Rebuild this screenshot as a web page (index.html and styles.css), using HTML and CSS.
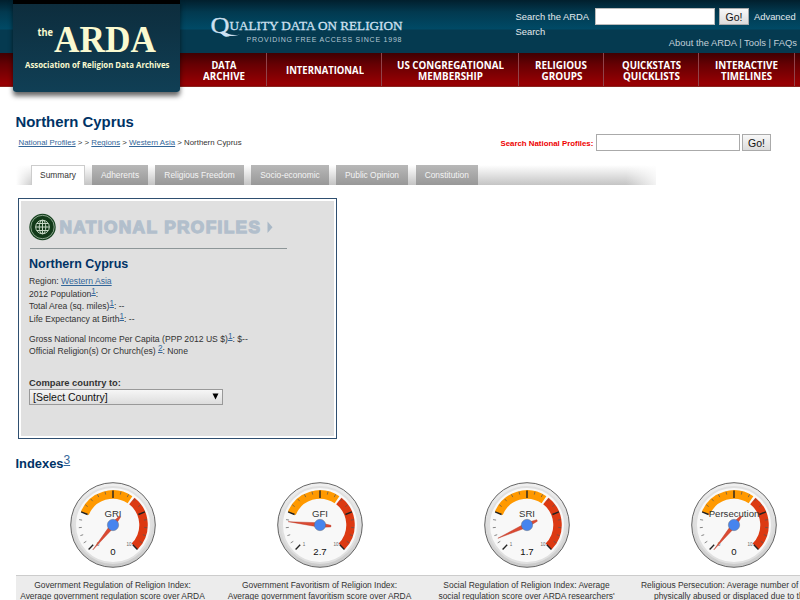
FILE: index.html
```html
<!DOCTYPE html>
<html lang="en">
<head>
<meta charset="utf-8">
<title>Northern Cyprus | National Profiles | the ARDA</title>
<link rel="stylesheet" href="styles.css">
</head>
<body>
<header class="site-header">
  <a class="logo">
    <svg width="167" height="92" viewBox="0 0 167 92">
      <g class="logo-sans"><text x="24.500" y="36" font-size="10" textLength="15.500" lengthAdjust="spacingAndGlyphs">the</text>
      <text x="12" y="68" font-size="8.600" textLength="144.500" lengthAdjust="spacingAndGlyphs">Association of Religion Data Archives</text></g>
      <text class="logo-name" x="41" y="52" textLength="102" lengthAdjust="spacingAndGlyphs">ARDA</text>
    </svg>
  </a>
  <div class="header-main">
    <div class="top-row">
      <svg class="tagline" width="230" height="53" viewBox="0 0 230 53">
        <g class="tagline-serif"><text x="30.500" y="32.500" font-size="24" textLength="19" lengthAdjust="spacingAndGlyphs">Q</text>
        <path d="M39 32C43 36 50 37.500 60 34.500C52 36 48 34 44 31.500Z" fill="#cfe0f0"/>
        <text x="49.500" y="29.500" font-size="13.500" textLength="173" lengthAdjust="spacingAndGlyphs">UALITY DATA ON RELIGION</text></g>
        <text class="tagline-sub" x="66.500" y="41.500" textLength="155" lengthAdjust="spacing">PROVIDING FREE ACCESS SINCE 1998</text>
      </svg>
      <div class="tools">
        <form class="site-search"><label>Search the ARDA</label><input type="text"><button type="button">Go!</button><a>Advanced</a></form>
        <a class="search-wrap">Search</a>
        <div class="util">About the ARDA | Tools | FAQs</div>
      </div>
    </div>
    <nav class="main-nav">
      <a class="n1"><svg width="42" height="33"><text x="8.500" y="15.500" textLength="25" lengthAdjust="spacingAndGlyphs">DATA</text><text x="0" y="26.500" textLength="42" lengthAdjust="spacingAndGlyphs">ARCHIVE</text></svg></a>
      <a class="n2"><svg width="78" height="33"><text x="0" y="20.500" textLength="78" lengthAdjust="spacingAndGlyphs">INTERNATIONAL</text></svg></a>
      <a class="n3"><svg width="107" height="33"><text x="0" y="15.500" textLength="107" lengthAdjust="spacingAndGlyphs">US CONGREGATIONAL</text><text x="21" y="26.500" textLength="65" lengthAdjust="spacingAndGlyphs">MEMBERSHIP</text></svg></a>
      <a class="n4"><svg width="52" height="33"><text x="0" y="15.500" textLength="52" lengthAdjust="spacingAndGlyphs">RELIGIOUS</text><text x="6.500" y="26.500" textLength="41" lengthAdjust="spacingAndGlyphs">GROUPS</text></svg></a>
      <a class="n5"><svg width="59" height="33"><text x="0" y="15.500" textLength="59" lengthAdjust="spacingAndGlyphs">QUICKSTATS</text><text x="1" y="26.500" textLength="57" lengthAdjust="spacingAndGlyphs">QUICKLISTS</text></svg></a>
      <a class="n6"><svg width="63" height="33"><text x="0" y="15.500" textLength="63" lengthAdjust="spacingAndGlyphs">INTERACTIVE</text><text x="6" y="26.500" textLength="51" lengthAdjust="spacingAndGlyphs">TIMELINES</text></svg></a>
      <a class="n7"></a>
    </nav>
  </div>
</header>

<main>
  <h1>Northern Cyprus</h1>
  <div class="crumb-row">
    <div class="crumbs"><a>National Profiles</a> &gt; &gt; <a>Regions</a> &gt; <a>Western Asia</a> &gt; Northern Cyprus</div>
    <form class="profile-search"><label>Search National Profiles:</label><input type="text"><button type="button">Go!</button></form>
  </div>
  <div class="tabs">
    <a class="tab active">Summary</a><a class="tab t2">Adherents</a><a class="tab t3">Religious Freedom</a><a class="tab t4">Socio-economic</a><a class="tab t5">Public Opinion</a><a class="tab t6">Constitution</a>
  </div>

  <section class="panel">
    <div class="panel-body">
      <svg class="panel-title" width="250" height="28" viewBox="0 0 250 28">
        <circle cx="13.500" cy="14" r="13.200" fill="#16421f"/>
        <circle cx="13.500" cy="14" r="11.700" fill="none" stroke="#b9c9b8" stroke-width=".7"/>
        <circle cx="13.500" cy="14" r="10.500" fill="#123a19"/>
        <g fill="none" stroke="#c6d8c5" stroke-width="1">
          <circle cx="13.500" cy="14" r="6.800"/><ellipse cx="13.500" cy="14" rx="3.300" ry="6.800"/>
          <path d="M13.500 7.200v13.600M6.700 14h13.600M7.800 10.500h11.400M7.800 17.500h11.400"/>
        </g>
        <text x="30.500" y="19.800" textLength="200.500" lengthAdjust="spacing">NATIONAL PROFILES</text>
        <path d="M238.500 8.500v11.500l5-5.700z" fill="#a9b8c6"/>
      </svg>
      <hr>
      <h2>Northern Cyprus</h2>
      <p>Region: <a>Western Asia</a><br>2012 Population<sup><a>1</a></sup>:<br>Total Area (sq. miles)<sup><a>1</a></sup>: --<br>Life Expectancy at Birth<sup><a>1</a></sup>: --</p>
      <p class="second">Gross National Income Per Capita (PPP 2012 US $)<sup><a>1</a></sup>: $--<br>Official Religion(s) Or Church(es) <sup><a>2</a></sup>: None</p>
      <div class="compare">Compare country to:</div>
      <div class="select"><span>[Select Country]</span><svg width="7" height="7"><path d="M.500 .500h6L3.500 6.500z"/></svg></div>
    </div>
  </section>

  <h3>Indexes<sup><a>3</a></sup></h3>

  <svg class="defs" width="0" height="0">
    <defs>
      <linearGradient id="rim" x1="0" y1="0" x2="0" y2="1"><stop offset="0" stop-color="#f0f0f0"/><stop offset="1" stop-color="#cacaca"/></linearGradient>
      <symbol id="dial" viewBox="-44 -44 88 88">
        <circle r="42.300" fill="url(#rim)" stroke="#555" stroke-width=".9"/>
        <circle r="38" fill="#f8f8f8" stroke="#e0e0e0" stroke-width="2"/>
        <path d="M-28.200 -11.700A30.500 30.500 0 0 1 17 -25.300" fill="none" stroke="#ff9900" stroke-width="8.500"/>
        <path d="M18.800 -24A30.500 30.500 0 0 1 21.600 21.600" fill="none" stroke="#dc3912" stroke-width="8.500"/>
        <path stroke="#222" stroke-width="1.400" d="M0 -34.500V-27M-31.900 -13.200L-25.400 -10.500M31.900 -13.200L25.400 -10.500M-24.400 24.400L-19.800 19.800M24.400 24.400L19.800 19.800"/>
        <path stroke="#555" stroke-width=".7" d="M8 -33.400L7.300 -30.400M15.600 -30.600L14.200 -27.900M22.300 -26.100L20.300 -23.800M27.700 -20.200L25.300 -18.400M33.900 -5.400L30.900 -4.900M34.200 2.700L31.200 2.400M32.600 10.600L29.800 9.700M29.300 17.900L26.700 16.300M-8 -33.400L-7.300 -30.400M-15.600 -30.600L-14.200 -27.900M-22.300 -26.100L-20.300 -23.800M-27.700 -20.200L-25.300 -18.400M-33.900 -5.400L-30.900 -4.900M-34.200 2.700L-31.200 2.400M-32.600 10.600L-29.800 9.700M-29.300 17.900L-26.700 16.300"/>
      </symbol>
      <symbol id="needle" viewBox="-44 -44 88 88">
        <path d="M0 -32L2.200 0L.800 11H-.800L-2.200 0Z" fill="#dc4a32" stroke="#b83a2a" stroke-width=".4"/>
      </symbol>
    </defs>
  </svg>

  <div class="indexes">
    <div class="index">
      <svg class="gauge" viewBox="-44 -44 88 88"><use href="#dial" x="-44" y="-44" width="88" height="88"/><text class="tiny" x="-15" y="20.500">0</text><text class="tiny" x="16" y="20.500">10</text><text class="name" y="-8">GRI</text><g transform="rotate(-141)"><use href="#needle" x="-44" y="-44" width="88" height="88"/></g><circle r="5.700" fill="#4684ee" stroke="#666" stroke-width=".4"/><text class="value" y="29.500">0</text></svg>
      <p>Government Regulation of Religion Index:<br>Average government regulation score over ARDA</p>
    </div>
    <div class="index">
      <svg class="gauge" viewBox="-44 -44 88 88"><use href="#dial" x="-44" y="-44" width="88" height="88"/><text class="tiny" x="-16" y="20.500">1</text><text class="tiny" x="16" y="20.500">10</text><text class="name" y="-8">GFI</text><g transform="rotate(-84)"><use href="#needle" x="-44" y="-44" width="88" height="88"/></g><circle r="5.700" fill="#4684ee" stroke="#666" stroke-width=".4"/><text class="value" y="29.500">2.7</text></svg>
      <p>Government Favoritism of Religion Index:<br>Average government favoritism score over ARDA</p>
    </div>
    <div class="index">
      <svg class="gauge" viewBox="-44 -44 88 88"><use href="#dial" x="-44" y="-44" width="88" height="88"/><text class="tiny" x="-16" y="20.500">1</text><text class="tiny" x="16" y="20.500">10</text><text class="name" y="-8">SRI</text><g transform="rotate(-114.500)"><use href="#needle" x="-44" y="-44" width="88" height="88"/></g><circle r="5.700" fill="#4684ee" stroke="#666" stroke-width=".4"/><text class="value" y="29.500">1.7</text></svg>
      <p>Social Regulation of Religion Index: Average<br>social regulation score over ARDA researchers'</p>
    </div>
    <div class="index">
      <svg class="gauge" viewBox="-44 -44 88 88"><use href="#dial" x="-44" y="-44" width="88" height="88"/><text class="tiny" x="-15" y="20.500">0</text><text class="tiny" x="16" y="20.500">10</text><text class="name" y="-8">Persecution</text><g transform="rotate(-141)"><use href="#needle" x="-44" y="-44" width="88" height="88"/></g><circle r="5.700" fill="#4684ee" stroke="#666" stroke-width=".4"/><text class="value" y="29.500">0</text></svg>
      <p>Religious Persecution: Average number of people<br>physically abused or displaced due to their</p>
    </div>
  </div>
</main>
</body>
</html>
```
FILE: styles.css
```css
* { box-sizing: border-box; }
html, body { height: 600px; overflow: hidden; }
body { margin: 0; background: #fff; color: #333; font-family: "Liberation Sans", Arial, sans-serif; }
h1, h2, h3, p { margin: 0; }
svg { display: block; }
a { color: #336699; }
sup { line-height: 0; }
sup a, p a, .crumbs a { text-decoration: underline; }

.site-header {
  display: flex;
  height: 87px;
  padding-left: 13px;
  background: linear-gradient(#011f2d 0, #02394f 12px, #004a66 29px, #053a50 30px, #053a50 53px, #3f0002 53px, #650003 64px, #980003 84px, #8f0003 86px, #8a4a3a 87px);
}
.logo {
  width: 167px;
  height: 92px;
  flex: none;
  border-radius: 0 0 3px 3px;
  background: linear-gradient(#000 4px, #0d2d3d 4px, #103f55 100%);
  box-shadow: 0 4px 5px rgba(0, 0, 0, .6);
}
.logo text { fill: #fafad0; }
.logo-sans text { font-family: "Open Sans", sans-serif; font-weight: 700; }
.logo-name { font-family: "Liberation Serif", serif; font-weight: 700; font-size: 38px; }
.header-main { flex: 1; min-width: 0; }
.top-row { display: flex; height: 53px; }
.tagline { flex: none; }
.tagline-serif text { font-family: "Liberation Serif", serif; fill: #cfe0f0; stroke: #cfe0f0; stroke-width: .3px; }
.tagline-sub { font-size: 7px; fill: #b4c8d4; }
.tools { margin-left: 105.500px; width: 284.500px; font-size: 9.400px; color: #e4eaee; }
.tools a { color: #e4eaee; }
.site-search { display: flex; align-items: center; padding-top: 8px; }
input { display: block; width: 120px; height: 17px; padding: 0; border: 1px solid #bbb; background: #fff; }
button { width: 30px; height: 17px; padding: 0; border: 1px solid #aaa; background: linear-gradient(#f8f8f8, #dcdcdc); color: #111; font: 10.500px "Liberation Sans", sans-serif; }
.site-search label { width: 79.500px; white-space: nowrap; }
.site-search button { margin: 0 5px 0 4px; }
.search-wrap { display: block; line-height: 12px; padding-top: 1px; }
.util { text-align: right; line-height: 9px; padding: 0 3px 0 0; color: #c3d0d8; }

.main-nav { display: flex; height: 33px; }
.main-nav a { flex: none; border-right: 1px solid #91434a; }
.main-nav text { font-family: "Open Sans", sans-serif; font-weight: 700; font-size: 10.800px; fill: #fff; }
.n1 { width: 87px; padding-left: 23px; }
.n2 { width: 115px; padding-left: 19px; }
.n3 { width: 137px; padding-left: 15px; }
.n4 { width: 85px; padding-left: 16px; }
.n5 { width: 95px; padding-left: 18px; }
.n6 { width: 96px; padding-left: 16px; }
.main-nav .n7 { flex: 1; border: 0; }

main { padding: 27px 0 0 16px; }
h1 { margin-left: -.5px; font-size: 14.900px; line-height: 17px; color: #003366; }
.crumb-row { display: flex; height: 34px; }
.crumbs { width: 484.500px; padding: 7px 0 0 2.500px; font-size: 7.850px; line-height: 9px; }
.profile-search { display: flex; align-items: center; height: 17px; margin-top: 3px; }
.profile-search label { width: 95.500px; padding-top: 1px; font-size: 7.850px; font-weight: 700; color: #e00; white-space: nowrap; }
.profile-search input { width: 144px; border-color: #aaa; }
.profile-search button { width: 29px; margin-left: 2px; }

.tabs {
  display: flex;
  width: 640px;
  height: 20px;
  padding-left: 15px;
  background: linear-gradient(90deg, #fff, rgba(255, 255, 255, 0) 18px), linear-gradient(10deg, rgba(255, 255, 255, 0) 90%, #fff) right / 60px 20px no-repeat, linear-gradient(90deg, rgba(255, 255, 255, 0) 610px, rgba(255, 255, 255, .8) 640px), linear-gradient(#fff, #c4c4c4);
}
.tab { height: 20px; margin-right: 7px; color: #f4f4f4; font-size: 8.400px; line-height: 21px; text-align: center; background: linear-gradient(#b8b8b8, #989898); white-space: nowrap; }
.tab.active { width: 54px; background: #fff; color: #333; border: 1px solid #ccc; border-bottom: 0; line-height: 19px; }
.t2 { width: 56px; }
.t3 { width: 89px; }
.t4 { width: 78px; }
.t5 { width: 72px; margin-right: 7.500px; }
.t6 { width: 62.500px; }

.panel { width: 319px; height: 241px; margin: 13px 0 0 2px; padding: 2px; border: 1px solid #2f4f70; }
.panel-body { height: 235px; padding: 12px 8px 0; background: #e0e0e0; }
.panel-title text { font-weight: 700; font-size: 17.300px; fill: #b2bfcc; stroke: #b2bfcc; stroke-width: 1.300px; }
hr { width: 257px; height: 1px; margin: 7px 0 0 1px; border: 0; background: #8d9698; }
h2 { margin-top: 8px; color: #003366; font-size: 12.500px; line-height: 15px; }
.panel p { margin-top: 3px; font-size: 8.620px; line-height: 12.500px; white-space: nowrap; }
.panel sup { font-size: 8.200px; vertical-align: 3px; }
.panel .second { margin-top: 7.500px; }
.compare { margin-top: 19px; font-size: 9.350px; font-weight: 700; line-height: 12px; }
.select { display: flex; align-items: center; justify-content: space-between; width: 194px; height: 16px; padding: 0 3px; border: 1px solid #999; background: linear-gradient(#f6f6f6, #ddd); color: #111; font-size: 10.500px; }

h3 { margin: 17px 0 0 -.5px; color: #003366; font-size: 12.900px; line-height: 16px; }
h3 sup { font-size: 12px; font-weight: 400; vertical-align: 4px; }
h3 a { text-decoration: underline; }
.defs { position: absolute; }
.indexes { display: grid; grid-template-columns: repeat(4, 207px); margin-top: 8.500px; }
.gauge { width: 88px; height: 88px; margin-left: 53px; }
.gauge text { text-anchor: middle; fill: #333; }
.gauge .name { font-size: 9.600px; }
.gauge .value { font-size: 9.600px; fill: #111; }
.gauge .tiny { font-size: 4.500px; fill: #666; }
.index p { height: 25px; margin-top: 6px; padding: 4px 14px 0 0; border-top: 1px solid #ccc; background: #ececec; font-size: 8.450px; line-height: 11px; text-align: center; white-space: nowrap; }
```
